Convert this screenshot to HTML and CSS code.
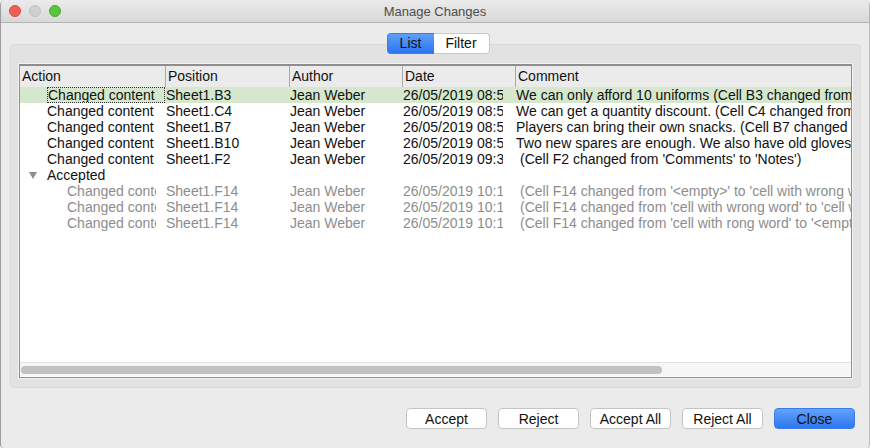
FILE: index.html
```html
<!DOCTYPE html>
<html lang="en">
<head>
    <meta charset="UTF-8">
    <title>Manage Changes</title>
    <link rel="stylesheet" href="styles.css">
</head>
<body>
    <div class="window">
        <div class="titlebar">
            <div class="lights">
                <span class="light red"></span>
                <span class="light grey"></span>
                <span class="light green"></span>
            </div>
            <div class="title">Manage Changes</div>
        </div>

        <div class="content">
            <div class="tabs">
                <span class="tab active">List</span>
                <span class="tab">Filter</span>
            </div>

            <div class="box">
                <div class="frame">
                    <div class="head">
                        <div class="hcell c-action">Action</div>
                        <div class="hcell c-pos">Position</div>
                        <div class="hcell c-author">Author</div>
                        <div class="hcell c-date">Date</div>
                        <div class="hcell c-comment">Comment</div>
                    </div>

                    <div class="rows">
                        <div class="row selected">
                            <div class="cell c-action lvl1"><span class="focus">Changed content</span></div>
                            <div class="cell c-pos">Sheet1.B3</div>
                            <div class="cell c-author">Jean Weber</div>
                            <div class="cell c-date">26/05/2019 08:53</div>
                            <div class="cell c-comment">We can only afford 10 uniforms (Cell B3 changed from '12' to '10')</div>
                        </div>
                        <div class="row">
                            <div class="cell c-action lvl1">Changed content</div>
                            <div class="cell c-pos">Sheet1.C4</div>
                            <div class="cell c-author">Jean Weber</div>
                            <div class="cell c-date">26/05/2019 08:54</div>
                            <div class="cell c-comment">We can get a quantity discount. (Cell C4 changed from '15' to '12')</div>
                        </div>
                        <div class="row">
                            <div class="cell c-action lvl1">Changed content</div>
                            <div class="cell c-pos">Sheet1.B7</div>
                            <div class="cell c-author">Jean Weber</div>
                            <div class="cell c-date">26/05/2019 08:55</div>
                            <div class="cell c-comment">Players can bring their own snacks. (Cell B7 changed from '20' to '0')</div>
                        </div>
                        <div class="row">
                            <div class="cell c-action lvl1">Changed content</div>
                            <div class="cell c-pos">Sheet1.B10</div>
                            <div class="cell c-author">Jean Weber</div>
                            <div class="cell c-date">26/05/2019 08:56</div>
                            <div class="cell c-comment">Two new spares are enough. We also have old gloves. (Cell B10 changed)</div>
                        </div>
                        <div class="row">
                            <div class="cell c-action lvl1">Changed content</div>
                            <div class="cell c-pos">Sheet1.F2</div>
                            <div class="cell c-author">Jean Weber</div>
                            <div class="cell c-date">26/05/2019 09:31</div>
                            <div class="cell c-comment pad">(Cell F2 changed from 'Comments' to 'Notes')</div>
                        </div>
                        <div class="row">
                            <div class="cell c-action"><span class="arrow"></span>Accepted</div>
                        </div>
                        <div class="row done">
                            <div class="cell c-action lvl2">Changed content</div>
                            <div class="cell c-pos">Sheet1.F14</div>
                            <div class="cell c-author">Jean Weber</div>
                            <div class="cell c-date">26/05/2019 10:14</div>
                            <div class="cell c-comment pad">(Cell F14 changed from '&lt;empty&gt;' to 'cell with wrong word')</div>
                        </div>
                        <div class="row done">
                            <div class="cell c-action lvl2">Changed content</div>
                            <div class="cell c-pos">Sheet1.F14</div>
                            <div class="cell c-author">Jean Weber</div>
                            <div class="cell c-date">26/05/2019 10:15</div>
                            <div class="cell c-comment pad">(Cell F14 changed from 'cell with wrong word' to 'cell with rong word')</div>
                        </div>
                        <div class="row done">
                            <div class="cell c-action lvl2">Changed content</div>
                            <div class="cell c-pos">Sheet1.F14</div>
                            <div class="cell c-author">Jean Weber</div>
                            <div class="cell c-date">26/05/2019 10:16</div>
                            <div class="cell c-comment pad">(Cell F14 changed from 'cell with rong word' to '&lt;empty&gt;')</div>
                        </div>
                    </div>

                    <div class="hscroll">
                        <div class="thumb"></div>
                    </div>
                </div>
            </div>

            <div class="buttons">
                <button class="btn">Accept</button>
                <button class="btn">Reject</button>
                <button class="btn">Accept All</button>
                <button class="btn">Reject All</button>
                <button class="btn primary">Close</button>
            </div>
        </div>
    </div>
</body>
</html>
```

FILE: styles.css
```css
body {
    margin: 0;
    background-color: #f2f2f2;
    font-family: 'Liberation Sans', Arial, sans-serif;
    font-size: 13px;
    color: #111;
}

.window {
    width: 868px;
    height: 448px;
    background-color: #ebebeb;
    border-left: 1px solid #9c9c9c;
    border-right: 1px solid #b8b8b8;
    border-radius: 5px 5px 4px 4px;
    overflow: hidden;
    display: flex;
    flex-direction: column;
}

.titlebar {
    height: 22px;
    border-bottom: 1px solid #b4b4b4;
    background: linear-gradient(#ebebeb, #d8d8d8);
    display: flex;
    align-items: center;
}

.lights {
    display: flex;
    gap: 8px;
    padding-left: 8px;
}

.light {
    width: 12px;
    height: 12px;
    border-radius: 50%;
    box-sizing: border-box;
}

.red {
    background-color: #ee5f57;
    border: 1px solid #dc4a42;
}

.grey {
    background-color: #d0d0d0;
    border: 1px solid #c2c2c2;
}

.green {
    background-color: #5ac33f;
    border: 1px solid #45ad2c;
}

.title {
    flex: 1;
    text-align: center;
    color: #4d4d4d;
    padding-right: 60px;
}

.content {
    flex: 1;
    display: flex;
    flex-direction: column;
    padding-top: 10px;
}

.tabs {
    display: flex;
    justify-content: center;
    padding-left: 6px;
    margin-bottom: -10px;
    position: relative;
    z-index: 1;
}

.tab {
    height: 19px;
    line-height: 19px;
    text-align: center;
    background-color: #fff;
    border: 1px solid #c9c9c9;
    font-size: 14px;
}

.tab:first-child {
    width: 46px;
    border-radius: 4px 0 0 4px;
    border-right: none;
}

.tab:last-child {
    width: 55px;
    border-radius: 0 4px 4px 0;
    border-left: none;
}

.tab.active {
    background: linear-gradient(#5d9ffa, #2d75f1);
    border-color: #3c7fe8;
}

.box {
    margin: 0 8px 0 9px;
    padding: 19px 8px 9px 8px;
    background-color: #e2e2e2;
    border: 1px solid #dadada;
    border-radius: 4px;
}

.frame {
    height: 311px;
    border: 1px solid #8e8e8e;
    border-top-width: 2px;
    box-shadow: 0 0 0 1px #f3f3f3;
    background-color: #fff;
    display: flex;
    flex-direction: column;
}

.head {
    display: flex;
    height: 21px;
    background-color: #ebebeb;
}

.hcell {
    line-height: 21px;
    padding-left: 2px;
    box-sizing: border-box;
    font-size: 14px;
    white-space: nowrap;
    overflow: hidden;
}

.hcell + .hcell {
    border-left: 1px solid #a9a9a9;
}

.c-action { width: 145px; flex: none; }
.c-pos { width: 124px; flex: none; }
.c-author { width: 113px; flex: none; }
.c-date { width: 113px; flex: none; }
.c-comment { flex: 1; min-width: 0; }

.rows {
    flex: 1;
}

.row {
    display: flex;
    height: 16px;
    line-height: 16px;
    font-size: 14px;
}

/* transparent right border keeps a gap before the next column */
.cell {
    box-sizing: border-box;
    padding-left: 1px;
    border-right: 9px solid transparent;
    white-space: nowrap;
    overflow: hidden;
    display: flex;
    align-items: center;
}

.cell.c-date {
    border-right-width: 12px;
}

.cell.c-comment {
    border-right: none;
}

.cell.c-action {
    padding-left: 9px;
}

.cell.lvl1 {
    padding-left: 27px;
    border-right: none;
}

.cell.lvl2 {
    padding-left: 47px;
}

.cell.pad {
    padding-left: 5px;
}

.row.selected {
    background-color: #d5e8cd;
}

.focus {
    display: block;
    width: 100%;
    height: 16px;
    box-sizing: border-box;
    border: 1px dotted #333;
    line-height: 14px;
    overflow: hidden;
}

.row.done {
    color: #8d8d8d;
}

.arrow {
    flex: none;
    width: 0;
    height: 0;
    border-left: 4px solid transparent;
    border-right: 4px solid transparent;
    border-top: 7px solid #8c8c8c;
    margin-right: 10px;
}

.hscroll {
    height: 14px;
    border-top: 1px solid #e2e2e2;
    background-color: #f6f6f6;
    padding: 3px 1px 0;
    box-sizing: border-box;
    margin-bottom: 1px;
}

.thumb {
    width: 641px;
    height: 8px;
    border-radius: 4px;
    background-color: #c1c1c1;
}

.buttons {
    display: flex;
    justify-content: flex-end;
    gap: 11px;
    padding: 20px 14px 0 0;
}

.btn {
    width: 81px;
    height: 21px;
    padding: 0;
    background-color: #fff;
    border: 1px solid #c4c4c4;
    border-radius: 4px;
    font-family: 'Liberation Sans', Arial, sans-serif;
    font-size: 14px;
    color: #111;
}

.btn.primary {
    background: linear-gradient(#62a2fa, #2f76f2);
    border-color: #3a7de8;
}
```
